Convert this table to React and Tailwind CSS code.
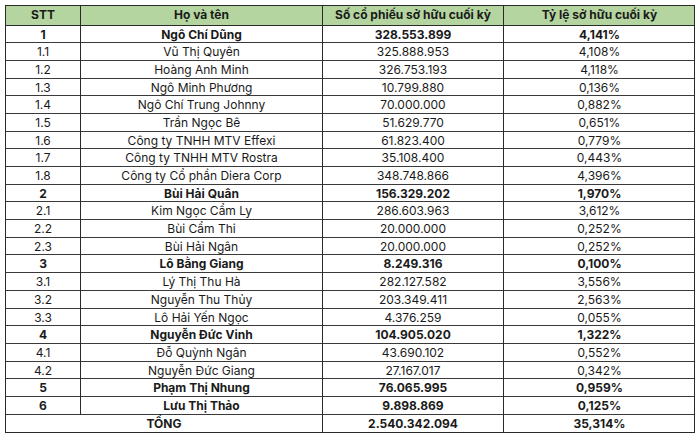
const rows = [
  { stt: "1", name: "Ngô Chí Dũng", shares: "328.553.899", pct: "4,141%", bold: true },
  { stt: "1.1", name: "Vũ Thị Quyên", shares: "325.888.953", pct: "4,108%" },
  { stt: "1.2", name: "Hoàng Anh Minh", shares: "326.753.193", pct: "4,118%" },
  { stt: "1.3", name: "Ngô Minh Phương", shares: "10.799.880", pct: "0,136%" },
  { stt: "1.4", name: "Ngô Chí Trung Johnny", shares: "70.000.000", pct: "0,882%" },
  { stt: "1.5", name: "Trần Ngọc Bê", shares: "51.629.770", pct: "0,651%" },
  { stt: "1.6", name: "Công ty TNHH MTV Effexi", shares: "61.823.400", pct: "0,779%" },
  { stt: "1.7", name: "Công ty TNHH MTV Rostra", shares: "35.108.400", pct: "0,443%" },
  { stt: "1.8", name: "Công ty Cổ phần Diera Corp", shares: "348.748.866", pct: "4,396%" },
  { stt: "2", name: "Bùi Hải Quân", shares: "156.329.202", pct: "1,970%", bold: true },
  { stt: "2.1", name: "Kim Ngọc Cẩm Ly", shares: "286.603.963", pct: "3,612%" },
  { stt: "2.2", name: "Bùi Cẩm Thi", shares: "20.000.000", pct: "0,252%" },
  { stt: "2.3", name: "Bùi Hải Ngân", shares: "20.000.000", pct: "0,252%" },
  { stt: "3", name: "Lô Bằng Giang", shares: "8.249.316", pct: "0,100%", bold: true },
  { stt: "3.1", name: "Lý Thị Thu Hà", shares: "282.127.582", pct: "3,556%" },
  { stt: "3.2", name: "Nguyễn Thu Thủy", shares: "203.349.411", pct: "2,563%" },
  { stt: "3.3", name: "Lô Hải Yến Ngọc", shares: "4.376.259", pct: "0,055%" },
  { stt: "4", name: "Nguyễn Đức Vinh", shares: "104.905.020", pct: "1,322%", bold: true },
  { stt: "4.1", name: "Đỗ Quỳnh Ngân", shares: "43.690.102", pct: "0,552%" },
  { stt: "4.2", name: "Nguyễn Đức Giang", shares: "27.167.017", pct: "0,342%" },
  { stt: "5", name: "Phạm Thị Nhung", shares: "76.065.995", pct: "0,959%", bold: true },
  { stt: "6", name: "Lưu Thị Thảo", shares: "9.898.869", pct: "0,125%", bold: true },
];

const cols = "grid grid-cols-[75px_242px_181px_191px]";

const App = () => {
  return (
    <div className="w-[700px] h-[438px] bg-white pt-[5px] pl-[5px] font-['Inter',sans-serif] text-[12px] text-[#1a1a1a]">
      <div className="w-[690px] border border-[#2a2a2a]">
        {/* header */}
        <div className={`${cols} h-[19.5px] bg-[#b4d59f] font-bold border-b border-[#2a2a2a]`}>
          <div className="flex items-center justify-center border-r border-[#2a2a2a]">STT</div>
          <div className="flex items-center justify-center border-r border-[#2a2a2a]">Họ và tên</div>
          <div className="flex items-center justify-center border-r border-[#2a2a2a]">Số cổ phiếu sở hữu cuối kỳ</div>
          <div className="flex items-center justify-center">Tỷ lệ sở hữu cuối kỳ</div>
        </div>

        {rows.map((row) => (
          <div
            key={row.stt}
            className={`${cols} h-[17.7px] border-b border-[#3a3a3a] ${row.bold ? "font-bold" : ""}`}
          >
            <div className="flex items-center justify-center border-r border-[#2a2a2a]">{row.stt}</div>
            <div className="flex items-center justify-center border-r border-[#2a2a2a]">{row.name}</div>
            <div className="flex items-center justify-center border-r border-[#2a2a2a]">{row.shares}</div>
            <div className="flex items-center justify-center">{row.pct}</div>
          </div>
        ))}

        {/* total */}
        <div className="grid grid-cols-[317px_181px_191px] h-[17.7px] font-bold">
          <div className="flex items-center justify-center border-r border-[#2a2a2a]">TỔNG</div>
          <div className="flex items-center justify-center border-r border-[#2a2a2a]">2.540.342.094</div>
          <div className="flex items-center justify-center">35,314%</div>
        </div>
      </div>
    </div>
  );
};

export default App;
